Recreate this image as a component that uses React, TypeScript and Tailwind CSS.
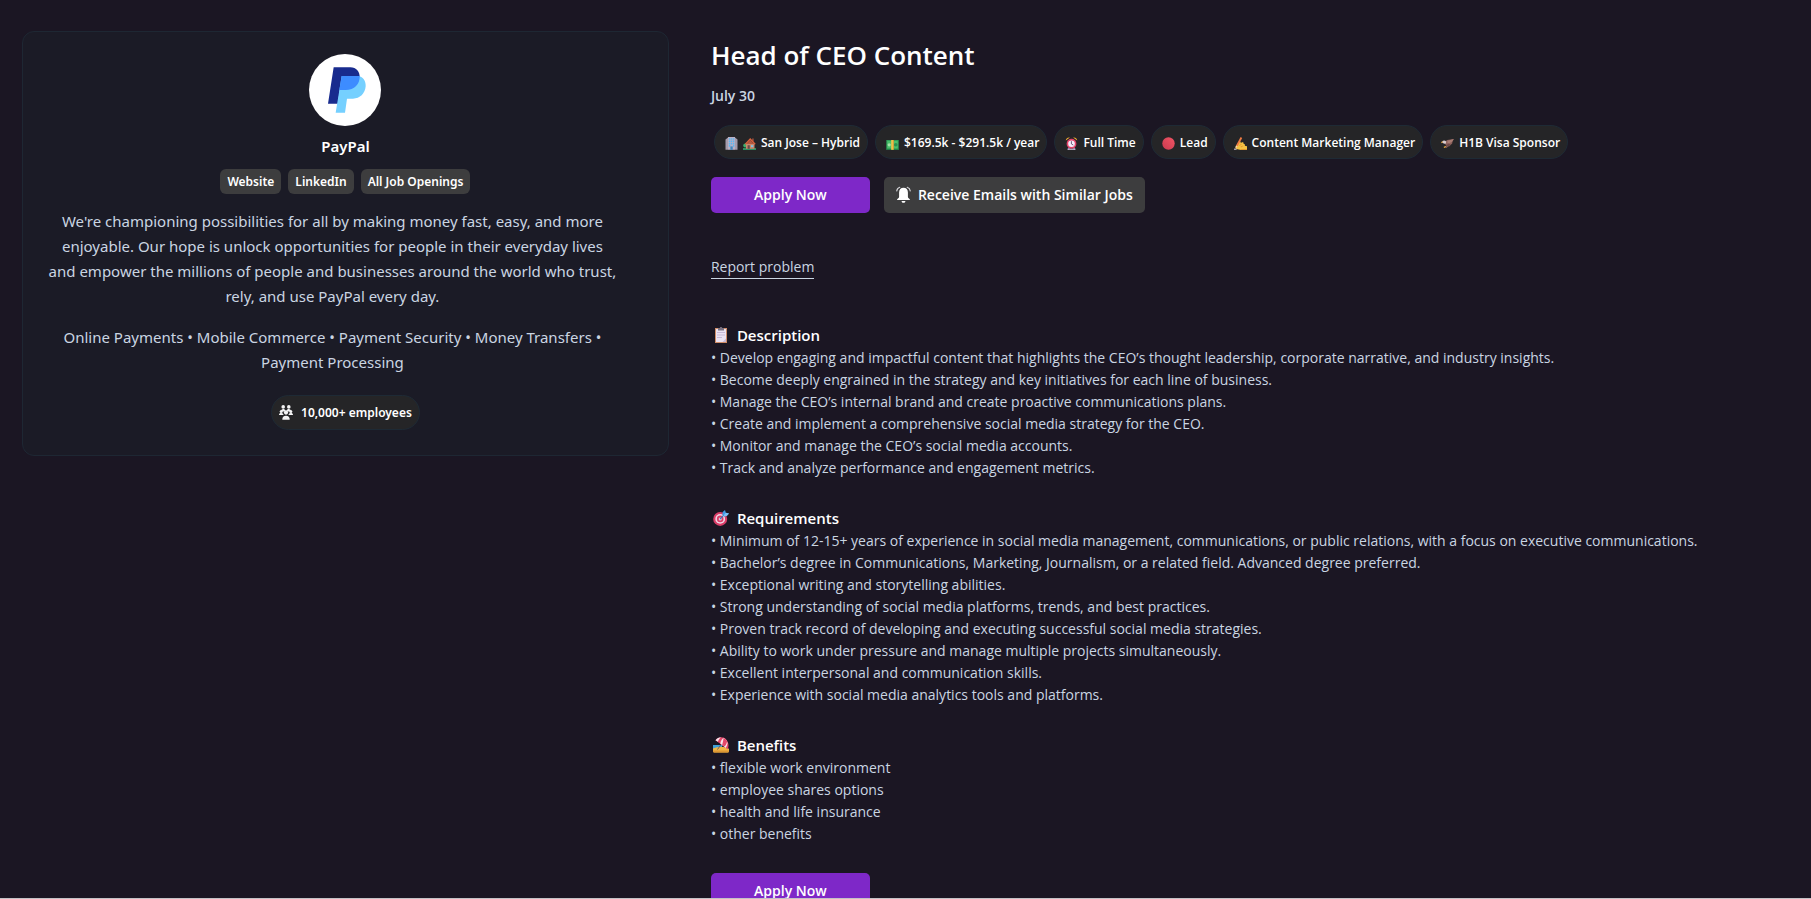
import type { ReactNode } from 'react';

interface Tag {
  label: string;
  icons: ReactNode[];
}

interface Section {
  title: string;
  icon: ReactNode;
  items: string[];
}

function PayPalLogo() {
  return (
    <svg viewBox="0 0 216 216" className="size-18" role="img" aria-label="PayPal logo">
      <circle cx="108" cy="108" r="108" fill="#fff" />
      <path fill="#182b8e" d="M74 40h50c18 0 29 14 28 31-2 23-19 38-42 38H92l-5 40H57z" />
      <path fill="#75d0ff" d="M98 66h48c16 1 25 15 24 31-2 22-17 37-38 37h-18l-6 42H80z" />
      <path fill="#3d8cff" d="M98 66h54c1 25-16 42-42 42H91z" />
    </svg>
  );
}

function BuildingIcon() {
  return (
    <svg viewBox="0 0 13 13" className="size-[13px]" aria-hidden="true">
      <path fill="#a59bab" d="M.5 2.5 3 .5v12.3H.5zM10 .5l2.5 2v10.3H10z" />
      <path fill="#b9b0c4" d="M3 0h7v12.8H3z" />
      <path fill="#5cb7f2" d="M3.8 1.2h1.5v1.6H3.8zM5.9 1.2h1.4v1.6H5.9zM8 1.2h1.3v1.6H8zM3.8 3.5h1.5v1.6H3.8zM5.9 3.5h1.4v1.6H5.9zM8 3.5h1.3v1.6H8zM3.8 5.8h1.5v1.6H3.8zM5.9 5.8h1.4v1.6H5.9zM8 5.8h1.3v1.6H8zM3.8 8.1h1.5v1.6H3.8zM8 8.1h1.3v1.6H8z" />
      <path fill="#3f87bd" d="M5.4 9.4h2.3v3.4H5.4z" />
    </svg>
  );
}

function HouseIcon() {
  return (
    <svg viewBox="0 0 13 13" className="size-[13px]" aria-hidden="true">
      <path fill="#2f8f62" d="M0 11h13v2H0z" />
      <circle cx="2.2" cy="8.6" r="2" fill="#3fae6b" />
      <path fill="#c98a6b" d="M3 6.5h8.5v5.3H3z" />
      <path fill="#8d4a3a" d="M9 1.5h1.8v3H9z" />
      <path fill="#d9623c" d="M7.2 1 1.8 6.8l1 .9 4.4-4.4 4.5 4.4 1-.9z" />
      <path fill="#b55a41" d="m7.2 3.2 3.6 3.7H3.6z" />
      <path fill="#6b4a4a" d="M4.6 8.2h2.2v3.6H4.6z" />
      <path fill="#7ec4e8" d="M8 8.2h2.2v1.9H8z" />
    </svg>
  );
}

function MoneyIcon() {
  return (
    <svg viewBox="0 0 13 13" className="size-[13px]" aria-hidden="true">
      <path fill="#2f9e58" d="M.3 3h12.4v9.8H.3z" />
      <path fill="#49bf6b" d="M1.3 4h10.4v7.6H1.3z" />
      <path fill="#1f7d46" d="M.3 11.8h12.4v1H.3z" />
      <circle cx="3.2" cy="7.8" r="1.6" fill="#a5e0a8" />
      <circle cx="9.8" cy="7.8" r="1.8" fill="#2a8c50" />
      <path fill="#f3c24b" d="M5.2 3h2.4v9.8H5.2z" />
      <path fill="#d9932f" d="M6.9 3h.7v9.8h-.7z" />
    </svg>
  );
}

function ClockIcon() {
  return (
    <svg viewBox="0 0 13 13" className="size-[13px]" aria-hidden="true">
      <path fill="#8a6fb0" d="m2.6 12.8 1.2-2.6 1.2.8-1.2 1.8zM10.4 12.8 9.2 10.2 8 11l1.2 1.8z" />
      <path fill="#f4a935" d="M.8 3.6C.7 1.6 2.6 0 4.9.5zM12.2 3.6C12.3 1.6 10.4 0 8.1.5z" />
      <path fill="#cfc3dd" d="M2.6 11.6h7.8v1.2H2.6z" />
      <circle cx="6.5" cy="6.7" r="4.9" fill="#e5446a" />
      <circle cx="6.5" cy="6.7" r="3.3" fill="#f5edfb" />
      <path fill="none" stroke="#5b4a6b" strokeWidth=".9" strokeLinecap="round" d="M6.4 4.6v2.3l1.6 1" />
    </svg>
  );
}

function RedCircleIcon() {
  return (
    <svg viewBox="0 0 13 13" className="size-[13px]" aria-hidden="true">
      <defs>
        <linearGradient id="red-dot" x1="1" y1="0" x2="0" y2="1">
          <stop offset="0" stopColor="#f25565" />
          <stop offset="1" stopColor="#c93a50" />
        </linearGradient>
      </defs>
      <circle cx="6.5" cy="6.5" r="6.2" fill="url(#red-dot)" />
    </svg>
  );
}

function WritingHandIcon() {
  return (
    <svg viewBox="0 0 13 13" className="size-[13px]" aria-hidden="true">
      <path fill="#f6c344" d="M5 4.8c1.2-.7 2 .2 1.7 1.4l1.2-.9c1.4-.4 2.2.7 1.5 1.8 1.3-.2 1.9.7 1.4 1.7l2.2.4v3.9H7.6L2.2 12C1 10.6 1.5 8.8 2.8 8z" />
      <path fill="#e29b2d" d="M6.2 12.1h6.8v1H7.4zM5.2 8.2l2.2-1.5.4.6L5.6 9zM6.6 9.6l2.5-1.2.3.7-2.4 1.3z" />
      <path fill="#ef7b43" d="M6.6 0 8.2 1 3.6 9.4 2 8.6z" />
      <path fill="#f6d7b5" d="m2 8.6 1.6.8-2.2 2z" />
      <path fill="#cbb9c9" d="M0 11.6h2.6v1.2H0z" />
    </svg>
  );
}

function EagleIcon() {
  return (
    <svg viewBox="0 0 13 13" className="size-[13px]" aria-hidden="true">
      <path fill="#8d625d" d="M4.4 4.5 6.2 3.1 12.8 2l-1.4 3-.2 1.6-1.4 1.2-1.4 1.5-1.4.1-1.5 1.7L3.8 10l1.4-1.6-1.4-1.9z" />
      <path fill="#a97c73" d="m6.6 3.8 6.2-1.8-1.7 2.6-2.7 1.6-2-.4z" />
      <path fill="#704b4a" d="m5 8.1 2.7-1.4 2 .8-1.3 1.5-1.8.1-1.2 1.5z" />
      <path fill="#d8ccd0" d="M1.3 4.2c1.1-1 3-.9 3.8.4l-.2 1.8-1.5.3-2.2-1z" />
      <path fill="#efae3e" d="M1.5 4.3.2 5l.3 1.2 1.2-.6zM2.6 10.1l1.8-1 .7.8-1.9 1z" />
    </svg>
  );
}

function ClipboardIcon() {
  return (
    <svg viewBox="0 0 16 16" className="size-4" aria-hidden="true">
      <path fill="#d18d68" d="M2 1h12v15H2z" />
      <path fill="#ece3f3" d="M3 2h10v13H3z" />
      <path fill="#c9b9d8" d="M4 5h8v1H4zM4 7.5h8v1H4zM4 10h5v1H4zM9.5 15l3.5-3.5V15z" />
      <path fill="#7a7180" d="M5 1h1.8C6.9-.2 9-.2 9.2 1H11v2.5H5z" />
    </svg>
  );
}

function TargetIcon() {
  return (
    <svg viewBox="0 0 16 16" className="size-4" aria-hidden="true">
      <circle cx="7.2" cy="8.9" r="7" fill="#d93d68" />
      <circle cx="7.2" cy="8.9" r="4.9" fill="#f1d7e6" />
      <circle cx="7.2" cy="8.9" r="3.3" fill="#d93d68" />
      <circle cx="7.2" cy="8.9" r="1.5" fill="#f1d7e6" />
      <path stroke="#3679b8" strokeWidth="1.2" strokeLinecap="round" d="m7.2 8.9 4-4.2" />
      <path fill="#3f9be6" d="m9.4 4.6.3-2.5L12 0l.8 2.7L16 3.6l-2.3 2.5-2.5.3z" />
      <path fill="#7dc2f5" d="m10.8 5.2 2-2.5L16 3.6l-2.3 2.5-2.3.2z" />
    </svg>
  );
}

function BeachIcon() {
  return (
    <svg viewBox="0 0 16 16" className="size-4" aria-hidden="true">
      <path fill="#3f9fd9" d="M0 8h9v4H0z" />
      <path fill="#f0b545" d="M0 11.4c3-.8 5-1.6 8-1.6s6 .8 8 2V14c0 1-.6 1.6-1.6 1.6H1.6C.6 15.6 0 15 0 14z" />
      <path fill="#dc9633" d="M0 13.6h16c0 1.4-.6 2-1.6 2H1.6c-1 0-1.6-.6-1.6-2z" />
      <path stroke="#6d5870" strokeWidth="1" d="M9.6 5.5 4.4 12.6" />
      <path fill="#e4476a" d="M2.5 3.2C5.2-.4 10.3-.6 13.3 2.7c2.4 2.7 2.8 6.5 1.3 9.5z" />
      <path fill="#f8e4ec" d="M2.5 3.2C4 1.2 6 .3 8 .2 6.5 1.3 5.4 3 4.9 4.8zM7.3 6.4C7.8 3.8 9 1.7 10.6.8c2 1 3.6 3 4 5.4-.4 1.6-1 3.4-1.8 4.9z" />
      <path fill="#e4476a" d="M9.2 7.9c.8-2.8 1.2-5.2 1.4-7.1 1.5.7 2.8 2 3.5 3.7-.5 2.3-1.6 4.4-2.8 5z" />
    </svg>
  );
}

function BellIcon() {
  return (
    <svg viewBox="0 0 16 18" className="h-[18px] w-[15px]" aria-hidden="true">
      <path fill="#fff" d="M8 1.2c3 0 4.7 2.2 4.7 5v4.6c0 1 .8 1.8 2 2.6.4.4.2 1-.4 1H1.7c-.6 0-.8-.6-.4-1 1.2-.8 2-1.6 2-2.6V6.2c0-2.8 1.7-5 4.7-5z" />
      <path fill="#fff" d="M5.9 15.3h4.2c-.2 1.3-1 2-2.1 2s-1.9-.7-2.1-2z" />
      <path fill="none" stroke="#d4d4d8" strokeWidth="1.2" strokeLinecap="round" d="M4 .8C2.2 1.4 1 2.7.8 4.6M12 .8c1.8.6 3 1.9 3.2 3.8" />
    </svg>
  );
}

function PeopleIcon() {
  return (
    <svg viewBox="0 0 14 15" className="h-[15px] w-3.5 fill-zinc-100" aria-hidden="true">
      <circle cx="4.2" cy="1.9" r="1.8" />
      <circle cx="9.8" cy="1.9" r="1.8" />
      <path d="M2 6.6c0-1.8.8-2.7 2.2-2.7S6 4.6 6.3 5.6h1.4c.3-1 .7-1.7 2.1-1.7s2.2.9 2.2 2.7z" />
      <circle cx="2.2" cy="6.6" r="1.5" />
      <circle cx="11.8" cy="6.6" r="1.5" />
      <circle cx="7" cy="7.6" r="2.1" />
      <path d="M0 9.9c0-1.2.8-1.8 2.2-1.8 1 0 1.7.4 2.2 1.1v.7zM14 9.9c0-1.2-.8-1.8-2.2-1.8-1 0-1.7.4-2.2 1.1v.7z" />
      <path d="M3.3 14.7c0-2.7 1.2-4 3.7-4s3.7 1.3 3.7 4z" />
    </svg>
  );
}

const links = ['Website', 'LinkedIn', 'All Job Openings'];

const tags: Tag[] = [
  { label: 'San Jose – Hybrid', icons: [<BuildingIcon key="office" />, <HouseIcon key="home" />] },
  { label: '$169.5k - $291.5k / year', icons: [<MoneyIcon key="money" />] },
  { label: 'Full Time', icons: [<ClockIcon key="clock" />] },
  { label: 'Lead', icons: [<RedCircleIcon key="level" />] },
  { label: 'Content Marketing Manager', icons: [<WritingHandIcon key="role" />] },
  { label: 'H1B Visa Sponsor', icons: [<EagleIcon key="visa" />] },
];

const sections: Section[] = [
  {
    title: 'Description',
    icon: <ClipboardIcon />,
    items: [
      'Develop engaging and impactful content that highlights the CEO’s thought leadership, corporate narrative, and industry insights.',
      'Become deeply engrained in the strategy and key initiatives for each line of business.',
      'Manage the CEO’s internal brand and create proactive communications plans.',
      'Create and implement a comprehensive social media strategy for the CEO.',
      'Monitor and manage the CEO’s social media accounts.',
      'Track and analyze performance and engagement metrics.',
    ],
  },
  {
    title: 'Requirements',
    icon: <TargetIcon />,
    items: [
      'Minimum of 12-15+ years of experience in social media management, communications, or public relations, with a focus on executive communications.',
      'Bachelor’s degree in Communications, Marketing, Journalism, or a related field. Advanced degree preferred.',
      'Exceptional writing and storytelling abilities.',
      'Strong understanding of social media platforms, trends, and best practices.',
      'Proven track record of developing and executing successful social media strategies.',
      'Ability to work under pressure and manage multiple projects simultaneously.',
      'Excellent interpersonal and communication skills.',
      'Experience with social media analytics tools and platforms.',
    ],
  },
  {
    title: 'Benefits',
    icon: <BeachIcon />,
    items: [
      'flexible work environment',
      'employee shares options',
      'health and life insurance',
      'other benefits',
    ],
  },
];

function CompanyCard() {
  return (
    <aside className="flex flex-col items-center self-start rounded-xl border border-[#1e2733] bg-[#1b1b26] px-6 pt-[22px] pb-[25px] text-center font-['Noto_Sans',sans-serif]">
      <PayPalLogo />
      <h2 className="mt-2 text-[15px] leading-6 font-semibold text-white">PayPal</h2>
      <nav className="mt-[11px] flex gap-[7px]">
        {links.map((link) => (
          <a
            key={link}
            href="#"
            className="rounded-md bg-[#3d3d3e] px-[7px] text-xs leading-[25px] font-semibold text-white hover:bg-[#4a4a4b]"
          >
            {link}
          </a>
        ))}
      </nav>
      <div className="mt-[15px] space-y-4 pr-[26px] text-[15px] leading-[25px] text-slate-300">
        <p>
          We're championing possibilities for all by making money fast, easy, and more enjoyable. Our hope is
          unlock opportunities for people in their everyday lives and empower the millions of people and
          businesses around the world who trust, rely, and use PayPal every day.
        </p>
        <p>Online Payments • Mobile Commerce • Payment Security • Money Transfers • Payment Processing</p>
      </div>
      <div className="mt-5 flex h-[35px] items-center gap-2 rounded-full border border-[#1e2a35] bg-[#252527] px-[7px] text-xs font-semibold text-white">
        <PeopleIcon />
        10,000+ employees
      </div>
    </aside>
  );
}

function ApplyButton() {
  return (
    <button
      type="button"
      className="h-9 w-[159px] rounded-[5px] bg-[#7e28c8] text-sm font-semibold text-white hover:bg-[#8c37d6]"
    >
      Apply Now
    </button>
  );
}

export default function App() {
  return (
    <div className="h-screen overflow-hidden border-b border-[#c4c2c6] bg-[#1b1623] font-['Open_Sans',sans-serif]">
      <div className="grid grid-cols-[3fr_5fr] gap-[42px] px-[22px] pt-[31px]">
        <CompanyCard />

        <main className="flex flex-col items-start pt-1.5">
          <h1 className="text-[26px] leading-9 font-semibold text-white">Head of CEO Content</h1>
          <p className="mt-[13px] text-sm font-semibold text-slate-300">July 30</p>

          <ul className="mt-[19px] ml-[3px] flex flex-wrap gap-[7px]">
            {tags.map((tag) => (
              <li
                key={tag.label}
                className="flex h-[34px] items-center gap-[5px] rounded-full border border-[#1e2a35] bg-[#252527] pt-0.5 pr-[7px] pl-2.5 text-xs font-semibold text-white"
              >
                {tag.icons}
                {tag.label}
              </li>
            ))}
          </ul>

          <div className="mt-[18px] flex gap-[14px]">
            <ApplyButton />
            <button
              type="button"
              className="flex h-9 items-center gap-[7px] rounded-[5px] bg-[#3d3d3e] px-3 text-sm font-semibold text-white hover:bg-[#4a4a4b]"
            >
              <BellIcon />
              Receive Emails with Similar Jobs
            </button>
          </div>

          <a href="#" className="mt-[43px] border-b border-slate-300 pb-px text-sm leading-[21px] text-slate-300">
            Report problem
          </a>

          <div className="mt-11 mb-7 space-y-[27px]">
            {sections.map((section) => (
              <section key={section.title}>
                <h3 className="ml-0.5 flex items-center gap-2 text-[15px] leading-6 font-semibold text-white">
                  {section.icon}
                  {section.title}
                </h3>
                <ul className="text-sm leading-[22px] text-slate-300">
                  {section.items.map((item) => (
                    <li key={item}>• {item}</li>
                  ))}
                </ul>
              </section>
            ))}
          </div>

          <ApplyButton />
        </main>
      </div>
    </div>
  );
}
